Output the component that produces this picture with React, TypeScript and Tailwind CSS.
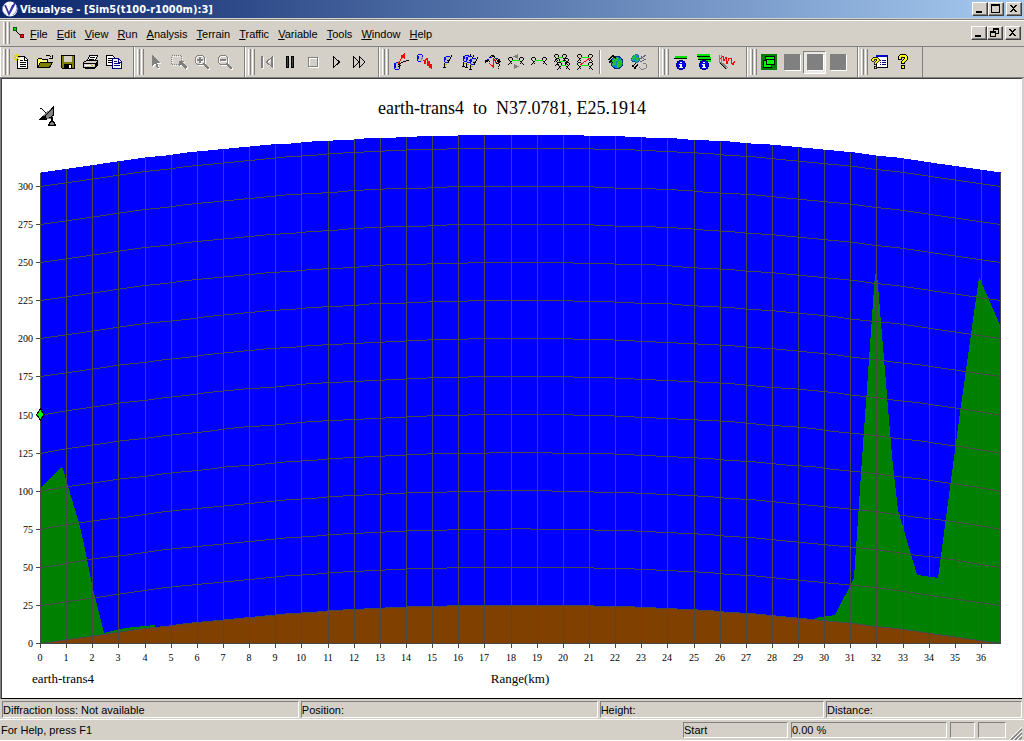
import React from "react";

const menus = ["File", "Edit", "View", "Run", "Analysis", "Terrain", "Traffic", "Variable", "Tools", "Window", "Help"];

function Icon({ children, disabled }: any) {
  return (
    <svg width="16" height="16" viewBox="0 0 16 16" className="overflow-visible" fill="none" stroke="currentColor" shapeRendering="crispEdges" aria-hidden="true">
      {disabled && <g className="text-white" transform="translate(1 1)">{children}</g>}
      <g className={disabled ? "text-[#808080]" : "text-black"}>{children}</g>
    </svg>
  );
}

// satellite node used at both ends of a link
function Node({ x, y, flip }: any) {
  return (
    <g transform={flip ? `translate(${x} ${y}) scale(-1 1)` : `translate(${x} ${y})`}>
      <path d="M1 .5h3M.5 1v2M4.5 1v2M1 3.5h1M3 4.5h1M2.5 4v2M1 6.5h1M0 7.5h1M3 6.5h1" />
    </g>
  );
}

function Link({ y, x = 0, w = 16 }: any) {
  return (
    <g>
      <path d={`M${x + 4} ${y + 3.5}H${x + w - 4}`} stroke="#00f000" />
      <Node x={x} y={y} />
      <Node x={x + w} y={y} flip />
    </g>
  );
}

function Dish({ x, y }: any) {
  return (
    <g transform={`translate(${x} ${y})`}>
      <path d="M2 1h5v5l-2 2H1V4z" fill="#c0c0c0" stroke="none" />
      <path d="M2.5 1.5h4M1.5 2v5M2.5 2v3M2 7.5h3" stroke="#0000ff" />
      <path d="M8.5 0v2M7.5 2v2M6.5 4v2M4 5.5h2M5.5 6v2M1.5 8v4M0 12.5h3" />
      <path d="M2 9.5h2" stroke="#c8b800" />
    </g>
  );
}

function Globe({ x = 8, y = 9, r = 6 }: any) {
  return (
    <g transform={`translate(${x} ${y}) scale(${r / 6})`}>
      <circle r="6" fill="#1080e0" stroke="#003080" />
      <path d="M-5-2l3-3h3l-1 3-2 1v3l-2 1zM1-1l3-2 1 3-2 4-3 1v-3z" fill="#20c020" stroke="#30d030" strokeWidth=".6" />
    </g>
  );
}

function Info() {
  return (
    <g>
      <circle cx="8" cy="11" r="4.5" fill="#0000ff" stroke="#000080" />
      <path d="M7 8.5h2M6 10.5h3M6 13.5h4" stroke="#fff" />
      <path d="M8 10v4" stroke="#fff" strokeWidth="2" />
    </g>
  );
}

const question = (
  <g>
    <path d="M3.5 5.5v-3l2-2h5l2 2v3l-3 3v1h-3v-2l3-3v-1h-3v2z" fill="#ffff00" />
    <path d="M6.5 11.5h3v3h-3z" fill="#ffff00" />
  </g>
);

const square = <path d="M0 0h16v16H0z" fill="currentColor" stroke="none" />;

const groups: any[] = [
  [
    { name: "New", icon: <><path d="M3.5 2.5h7l3 3v9h-10z" fill="#fff" /><path d="M10.5 3v3h3M6 6.5h3M6 8.5h6M6 10.5h6M6 12.5h6" /><path d="M2.5 0v7M-1 3.5h7M0 1l5 5M5 1l-5 5" stroke="#e0d000" /><path d="M2 3.5h1" stroke="#fff" /></> },
    { name: "Open", icon: <><path d="M.5 13.5v-8l1-1h3l1 1h5v3" fill="#ffff80" /><path d="M.5 13.5l3-5h12l-3 5z" fill="#808000" /><path d="M8.5 2.5l1-1h3l2 2M15.5 1v4M12 4.5h3" /></> },
    { name: "Save", icon: <><path d="M1.5 1.5h13v13h-12l-1-1z" fill="#808000" /><path d="M4 2h8v6H4z" fill="#d4d0c8" stroke="none" /><path d="M4 10h8v4H4z" fill="#000" stroke="none" /><path d="M9 11h2v3H9z" fill="#fff" stroke="none" /></> },
    { name: "Print", icon: <><path d="M4.5 6.5l2-5h8l-2 5" fill="#fff" /><path d="M7 3.5h5M6 5.5h5" /><path d="M.5 8.5l3-2h11v4l-3 3H.5z" fill="#d4d0c8" /><path d="M1 9.5h11M12.5 9v4M13.5 8v4M2.5 13.5v1h9l3-3" /><path d="M2 11.5h9" stroke="#fff" /><path d="M8 11.5h2" stroke="#c8c800" /></> },
    { name: "Copy", icon: <><path d="M.5 1.5h6l3 3v7h-9z" fill="#fff" /><path d="M2 4.5h4M2 6.5h5M2 8.5h4" /><path d="M6.5 4.5h6l3 3v7h-9z" fill="#fff" stroke="#000080" /><path d="M12.5 5v3h3M8 7.5h3M8 9.5h6M8 11.5h6" stroke="#000080" /></> },
  ],
  [
    { name: "Select", disabled: true, icon: <path d="M4 1v11l3-3 2 5h2l-2-5h4z" fill="currentColor" stroke="none" /> },
    { name: "Select area", disabled: true, icon: <><path d="M.5 1.5h10v9H.5z" strokeDasharray="1 1" /><path d="M8 7v5l2-1 4 4 2-2-4-4 1-2z" fill="currentColor" stroke="none" /></> },
    { name: "Zoom in", disabled: true, icon: <><circle cx="6" cy="6" r="5" /><path d="M3 6h6M6 3v6" strokeWidth="2" /><path d="M10 10l5 5" strokeWidth="2" /></> },
    { name: "Zoom out", disabled: true, icon: <><circle cx="6" cy="6" r="5" /><path d="M3 6h6" strokeWidth="2" /><path d="M10 10l5 5" strokeWidth="2" /></> },
  ],
  [
    { name: "Rewind", disabled: true, icon: <path d="M2.5 2v12M3.5 2v12M13.5 2.5v11l-6-5.5zM12.5 4v8" /> },
    { name: "Pause", icon: <path d="M4.5 2.5h2v11h-2zM9.5 2.5h2v11h-2z" fill="#404040" /> },
    { name: "Stop", disabled: true, icon: <path d="M3.5 3.5h9v9h-9z" /> },
    { name: "Play", icon: <path d="M5.5 2.5v11l6-5.5z" /> },
    { name: "Fast forward", icon: <path d="M2.5 2.5v11l5.5-5.5zM8.5 2.5v11l5.5-5.5z" /> },
  ],
  [
    { name: "Antenna", icon: <><path d="M2 9h5v3l-2 3H2z" fill="#c0c0c0" stroke="none" /><path d="M2.5 9v5M1.5 9v6M3 8.5h2M2 15.5h4M6.5 12v3" stroke="#0000ff" /><path d="M5 11l5-3 6-2M5 13l3-2" /><path d="M5 10l5-8" stroke="#f00" /><path d="M11.5 0v4l-3-2z" fill="#f00" stroke="#f00" /></> },
    { name: "Carrier", icon: <><path d="M2 2h5v4l-2 2H2z" fill="#c0c0c0" stroke="none" /><path d="M1.5 1v6M2.5 2v3M2 .5h4M2 7.5h3M6.5 1v2" stroke="#0000ff" /><path d="M5 6l2-3" stroke="#888" /><path d="M7 6.5h1v3h1v-4h1v-1h1v7h1v-4h1v6h1v-3h1v4h1" stroke="#f00" /></> },
    { name: "Station", icon: <Dish x={4} y={1} /> },
    { name: "Station group", icon: <><Dish x={0} y={0} /><Dish x={3} y={1} /><Dish x={7} y={3} /></> },
    { name: "Path query", icon: <><path d="M0 9l4-4M2 5l3 3M4 4l3-3M6 1l4 2M9 1l-3 3M9 3l3 3M13 4l-3 3M12 7l4 1M0 7h3M14 5v4" strokeWidth="1.2" /><path d="M2 5l2 1M5 3h2M10 4h2" stroke="#0000ff" /><path d="M8.5 4v9L4 9M8.5 5l3 4" stroke="#f00" /><path d="M11 9.5h3M14.5 10v2M13.5 12v1M13.5 14v1" /></> },
    { name: "Link arrows", icon: <><Link y={3} /><path d="M10 0v5L5 2.5zM6 10v5l5-2.5z" fill="#808080" stroke="none" /></> },
    { name: "Link", icon: <Link y={3} /> },
    { name: "Link group", icon: <><Link y={0} x={0} w={13} /><Link y={4} x={1} w={14} /><Link y={8} x={3} w={13} /></> },
    { name: "Interference", icon: <><Link y={0} /><Link y={8} /><path d="M3 11l10-7" stroke="#f00" /></> },
    { name: "Globe", sep: true, icon: <><Globe x={9} y={8.5} r={6} /><path d="M0 6l6-5M1 9l3-4M5 1l3 4M1 5l4 4" strokeWidth="1.2" /></> },
    { name: "Globe settings", icon: <><Globe x={4.5} y={4.5} r={4} /><path d="M1 13l4-4M3 15l4-5M1 11l4 4" strokeWidth="1.2" /><path d="M9 5l6-4M10 2l4 4M9 8l6-3" stroke="#606080" /><path d="M12 9l3 1v4l-2 1h-3l-2-2" stroke="#808090" /></> },
  ],
  [
    { name: "Link info", icon: <><path d="M1 4.5h13" stroke="#000" /><path d="M2 3h12" stroke="#00e000" strokeWidth="2" /><Info /></> },
    { name: "Group info", icon: <><path d="M1 1h13M2 4h13M4 7h11" stroke="#00e000" strokeWidth="2" /><path d="M1 2.5h13M2 5.5h13" /><Info /></> },
    { name: "Trace", icon: <><path d="M.5 1v7l7 7M2 1v7l7 6" stroke="#808080" /><path d="M1 9l6 6" /><path d="M1 5l3-3 1 5 2-4 1 7 2-6h2l1 6h2M12 8l2 2 2-3" stroke="#f00" /></> },
  ],
  [
    { name: "Windows", icon: <><path d="M0 0h16v16H0z" fill="#008000" stroke="none" /><path d="M4.5 2.5h9v8h-9z" fill="#00ff00" /><path d="M2.5 6.5h8v7h-8z" fill="#00ff00" /><path d="M5.5 5.5h8v5h-8z" fill="#00ff00" /></> },
    { name: "View 1", disabled: true, icon: square },
    { name: "View 2", disabled: true, pressed: true, icon: square },
    { name: "View 3", disabled: true, icon: square },
  ],
  [
    { name: "Help topics", icon: <><path d="M4.5 1.5h11v12h-11z" fill="#fff" /><path d="M4 2h12" stroke="#0000c0" strokeWidth="2" /><path d="M8 6.5h1M10 6.5h4M8 8.5h1M10 8.5h4M8 10.5h1M10 10.5h4" stroke="#000080" /><g transform="translate(-3 3) scale(.8)">{question}</g></> },
    { name: "Help", icon: question },
  ],
];

function ToolGroup({ items }: any) {
  return (
    <div className="flex h-[30px] items-center border-r border-l border-r-[#808080] border-l-white pr-2 pl-0.5">
      <Gripper />
      {items.map((item: any) => (
        <React.Fragment key={item.name}>
          {item.sep && <span className="mx-[3px] h-6 w-0.5 border-r border-l border-r-white border-l-[#808080]" />}
          <button
            aria-label={item.name}
            className={`flex h-[23px] w-[23px] items-center justify-center ${item.pressed ? "border border-t-[#808080] border-r-white border-b-white border-l-[#808080] bg-[#eae8e3]" : ""}`}
          >
            <Icon disabled={item.disabled}>{item.icon}</Icon>
          </button>
        </React.Fragment>
      ))}
    </div>
  );
}

function Gripper() {
  return (
    <span className="flex shrink-0 gap-px self-stretch py-0.5">
      <span className="w-[3px] border-r border-l border-r-[#808080] border-l-white" />
      <span className="w-[3px] border-r border-l border-r-[#808080] border-l-white" />
    </span>
  );
}

function CaptionButton({ name, children }: any) {
  return (
    <button
      aria-label={name}
      className="flex h-3.5 w-4 items-center justify-center border border-t-white border-r-[#404040] border-b-[#404040] border-l-white bg-[#d4d0c8] shadow-[inset_-1px_-1px_0_#808080]"
    >
      <svg width="10" height="10" viewBox="0 0 10 10" fill="none" stroke="#000" shapeRendering="crispEdges">{children}</svg>
    </button>
  );
}

const minimize = <path d="M1 8h6" strokeWidth="2" />;
const close = <path d="M1 1h2v1h1v1h1v-1h1v-1h2v1h-1v1h-1v1h-1v1h1v1h1v1h1v1h-2v-1h-1v-1h-1v1h-1v1h-2v-1h1v-1h1v-1h1v-1h-1v-1h-1v-1h-1z" fill="#000" stroke="none" />;

const LEFT = 38;
const RIGHT = 998;
const BASE = 564;
const KM = 26.14;
const METRE = 1.5233;
const TOP = 309;
const STEPS = 46;

// earth bulge, in pixels, at a horizontal position
function bulge(x: number) {
  const t = (x - LEFT) / (RIGHT - LEFT);
  return 38.4 * 4 * t * (1 - t);
}

function curve(height: number) {
  const pts = [];
  for (let i = 0; i <= STEPS; i++) {
    const x = LEFT + ((RIGHT - LEFT) * i) / STEPS;
    pts.push(`${Math.round(x) + 0.5},${Math.round(BASE - height * METRE - bulge(x)) + 0.5}`);
  }
  return pts.join(" ");
}

const terrain = [
  "38,410 60,387 77,444 82,465 90,506 102,554 123,549 153,546 153,564 38,564",
  "813,539 833,536 852,499 860,380 873,195 875,195 890,377 896,431 915,496 936,499 953,371 957,341 977,198 998,246 998,564 813,564",
];

function Chart() {
  const heights = Array.from({ length: 13 }, (_, i) => i * 25);
  const ranges = Array.from({ length: 37 }, (_, i) => i);
  return (
    <svg viewBox="0 0 1020 619" className="block h-auto w-full bg-white font-['Liberation_Serif',serif]">
      <g transform="translate(36 26)" shapeRendering="crispEdges" fill="none" stroke="#000">
        <path d="M15 2v9l-3 3H8l-4-3z" fill="#808080" stroke="none" />
        <path d="M15.5 1v9M14.5 2v2M13.5 3v2M12.5 5v1M11.5 6v1M10.5 7v1M9.5 8v1M8.5 9v1M7.5 10v1M2 3h2M3.500 3.500l5 5" />
        <path d="M0 15h9l-1-4H4z" fill="#000" stroke="none" />
        <path d="M15.500 10l-4 3M13 12h1v4h-1zM10.500 20.500h7l-2-4h-3z" fill="#808080" />
      </g>
      <text x="510" y="35" textAnchor="middle" className="text-[18px] whitespace-pre" xmlSpace="preserve">
        {"earth-trans4  to  N37.0781, E25.1914"}
      </text>
      <g shapeRendering="crispEdges">
        <polygon points={`${curve(TOP)} ${RIGHT},${BASE} ${LEFT},${BASE}`} fill="#0000ff" />
        {terrain.map((t) => <polygon key={t} points={t} fill="#008000" />)}
        <polygon points={`${curve(0)} ${RIGHT},${BASE} ${LEFT},${BASE}`} fill="#804000" />
        <g fill="none" stroke="#484848">
          {heights.map((h) => <polyline key={h} points={curve(h)} />)}
          {ranges.map((r) => {
            const x = Math.round(LEFT + r * KM) + 0.5;
            return <path key={r} d={`M${x} ${Math.round(BASE - TOP * METRE - bulge(x)) + 1}V${BASE + 5}`} />;
          })}
          {heights.map((h) => <path key={h} d={`M${LEFT - 4} ${Math.round(BASE - h * METRE) + 0.5}H${LEFT}`} />)}
          <path d="M38.5 564.5H998.5V94" />
        </g>
        <polygon points="38.5,329 43,335.5 38.5,342 34,335.5" fill="#000" />
        <polygon points="38.5,331 41.5,335.5 38.5,340 35.5,335.5" fill="#00ff00" />
      </g>
      <g className="text-[10px]">
        {heights.map((h) => <text key={h} x="31" y={Math.round(BASE - h * METRE) + 4} textAnchor="end">{h}</text>)}
        {ranges.map((r) => <text key={r} x={Math.round(LEFT + r * KM)} y="582" textAnchor="middle">{r}</text>)}
      </g>
      <text x="30" y="604" className="text-[13px]">earth-trans4</text>
      <text x="518" y="604" textAnchor="middle" className="text-[13px]">Range(km)</text>
    </svg>
  );
}

const sunken = "border border-t-[#808080] border-r-white border-b-white border-l-[#808080]";

export default function App() {
  return (
    <div className="flex min-h-screen flex-col bg-[#d4d0c8] font-['Liberation_Sans',sans-serif] text-[11px] leading-4 text-black">
      <header className="flex h-[18px] items-center bg-linear-to-r/srgb from-[#0a246a] to-[#a6caf0] pr-0.5 pl-0.5">
        <svg width="16" height="16" viewBox="0 0 16 16" aria-hidden="true">
          <circle cx="8" cy="8" r="7.5" fill="#fff" />
          <path d="M3 4l4 9 4-9M7 13L13 2" fill="none" stroke="#3030b0" strokeWidth="1.8" />
          <path d="M1 5a7.5 7.5 0 0 0 3 9M14.5 5a7.5 7.5 0 0 1-4 9" fill="none" stroke="#8890d8" />
        </svg>
        <h1 className="ml-0.5 flex-1 pt-0.5 font-['DejaVu_Sans_Condensed','DejaVu_Sans',sans-serif] font-bold text-white">Visualyse - [Sim5(t100-r1000m):3]</h1>
        <div className="flex">
          <CaptionButton name="Minimize">{minimize}</CaptionButton>
          <CaptionButton name="Maximize"><path d="M.5 .5h8v8h-8zM0 1.5h9" /></CaptionButton>
          <span className="w-0.5" />
          <CaptionButton name="Close">{close}</CaptionButton>
        </div>
      </header>

      <div className="mt-px flex h-[27px] items-center border-t border-[#808080] pr-[3px] pl-[3px] shadow-[inset_0_1px_0_#fff]">
        <Gripper />
        <svg className="mx-px" width="14" height="14" viewBox="0 0 14 14" shapeRendering="crispEdges" aria-hidden="true">
          <path d="M3 3l8 8" stroke="#000" />
          <circle cx="4" cy="3" r="2" fill="#00e000" stroke="#006000" />
          <circle cx="11" cy="10" r="2" fill="#f00" stroke="#800000" />
        </svg>
        <nav className="flex flex-1 gap-px pt-0.5">
          {menus.map((m) => (
            <button key={m} className="px-1">
              <u className="underline-offset-1">{m[0]}</u>{m.slice(1)}
            </button>
          ))}
        </nav>
        <div className="flex">
          <CaptionButton name="Minimize document">{minimize}</CaptionButton>
          <CaptionButton name="Restore document"><path d="M3.5 3V.5h5v5H6M3 1.5h6M.5 3.5h5v5h-5zM0 4.5h6" /></CaptionButton>
          <span className="w-0.5" />
          <CaptionButton name="Close document">{close}</CaptionButton>
        </div>
      </div>

      <div className="flex border-t border-[#808080]">
        {groups.map((items, i) => <ToolGroup key={i} items={items} />)}
      </div>

      <main className="border-t border-l border-[#808080]">
        <div className="mr-0.5 border-t border-b border-l border-[#404040] border-b-black">
          <Chart />
        </div>
      </main>

      <div className="flex h-[21px] gap-0.5 border-b border-white pt-0.5 pr-0.5 pb-px pl-0.5">
        <div className={`${sunken} w-[29.1%]`}>Diffraction loss: Not available</div>
        <div className={`${sunken} w-[29.1%]`}>Position:</div>
        <div className={`${sunken} w-[22%]`}>Height:</div>
        <div className={`${sunken} flex-1`}>Distance:</div>
      </div>

      <footer className="flex h-[21px] gap-[3px] border-b border-white pt-0.5 pr-0.5">
        <span className="flex-1 pl-px">For Help, press F1</span>
        <span className={`${sunken} h-4 w-[105px] leading-[15px]`}>Start</span>
        <span className={`${sunken} h-4 w-[156px] leading-[15px]`}>0.00 %</span>
        <span className={`${sunken} h-4 w-[25px]`} />
        <span className={`${sunken} h-4 w-7`} />
        <svg className="self-end" width="13" height="13" viewBox="0 0 13 13" aria-hidden="true">
          <path d="M0 13L13 0M4 13l9-9M8 13l5-5" stroke="#fff" />
          <path d="M2 13L13 2M6 13l7-7M10 13l3-3" stroke="#808080" strokeWidth="1.5" />
        </svg>
      </footer>
    </div>
  );
}
